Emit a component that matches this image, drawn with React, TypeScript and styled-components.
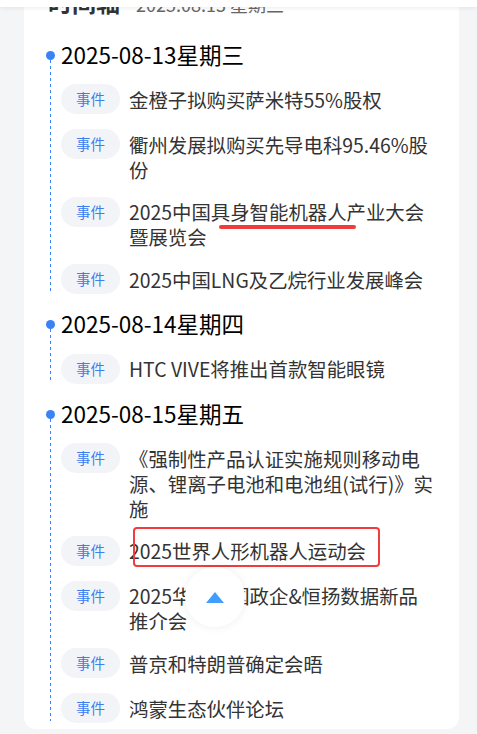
import React from 'react';
import styled, { createGlobalStyle } from 'styled-components';

const GlobalStyle = createGlobalStyle`
  html, body {
    margin: 0;
    padding: 0;
    background: #f4f5f7;
  }
  body {
    font-family: "Noto Sans CJK SC", "Noto Sans", sans-serif;
    color: #333;
  }
`;

const TopBar = styled.div`
  position: fixed;
  top: 0;
  left: 0;
  right: 0;
  height: 7px;
  background: #fff;
  box-shadow: 0 1px 4px rgba(0, 0, 0, 0.08);
  z-index: 5;
`;

const Card = styled.main`
  margin-left: 24px;
  width: 435px;
  box-sizing: border-box;
  background: #fff;
  border-radius: 0 0 12px 12px;
  padding: 0 24px 6px 22px;
  display: flex;
  flex-direction: column;
`;

// title row of the card, mostly scrolled under the top bar
const Heading = styled.div`
  display: flex;
  align-items: baseline;
  gap: 16px;
  height: 24px;
  margin: -10.5px 0 0 2px;
  line-height: 24px;
`;

const HeadingTitle = styled.span`
  font-size: 24px;
  font-weight: 700;
  color: #333;
`;

const HeadingDate = styled.span`
  font-size: 18px;
  color: #666;
`;

const Timeline = styled.div`
  margin-top: 25px;
  display: flex;
  flex-direction: column;
  gap: 14px;
`;

const Group = styled.section`
  display: flex;
  align-items: stretch;
`;

const Rail = styled.div`
  width: 9px;
  display: flex;
  flex-direction: column;
  align-items: center;
`;

const Dot = styled.span`
  width: 9px;
  height: 9px;
  border-radius: 50%;
  background: #3b82f6;
  margin-top: 12px;
  flex-shrink: 0;
`;

const DashLine = styled.span`
  flex: 1;
  width: 1px;
  margin-bottom: 2px;
  background: repeating-linear-gradient(
    to bottom,
    #3b82f6 0 3px,
    transparent 3px 6px
  );
`;

const Body = styled.div`
  flex: 1;
  margin-left: 6px;
  display: flex;
  flex-direction: column;
`;

const DateTitle = styled.h2`
  margin: 0;
  font-size: 22.5px;
  font-weight: 400;
  line-height: 30px;
  color: #000;
`;

const EventList = styled.ul`
  list-style: none;
  margin: 15.5px 0 0;
  padding: 0;
  display: flex;
  flex-direction: column;
  gap: 15px;
`;

const EventRow = styled.li`
  position: relative;
  display: flex;
  align-items: flex-start;
  gap: 9px;
`;

const Tag = styled.span`
  flex-shrink: 0;
  height: 30px;
  line-height: 30px;
  padding: 0 15px;
  border-radius: 15px;
  background: #f3f4f7;
  color: #3b7ff0;
  font-size: 14.5px;
`;

const EventText = styled.span`
  flex: 1;
  padding-top: 2.5px;
  font-size: 19.4px;
  line-height: 25px;
  color: #333;
`;

const MarkLine = styled.span`
  position: absolute;
  left: 158px;
  top: 28.5px;
  width: 137px;
  height: 3.5px;
  border-radius: 2px;
  background: #f03c3c;
`;

const MarkBox = styled.span`
  position: absolute;
  left: 72px;
  top: -8.5px;
  width: 247px;
  height: 40px;
  box-sizing: border-box;
  border: 2px solid #f03c3c;
  border-radius: 4px;
`;

const BackTop = styled.button`
  position: fixed;
  left: 185px;
  top: 567px;
  width: 60px;
  height: 60px;
  padding: 0;
  border: none;
  border-radius: 50%;
  background: #fff;
  box-shadow: 0 0 10px rgba(0, 0, 0, 0.07);
  display: flex;
  align-items: center;
  justify-content: center;
  z-index: 4;
`;

const Arrow = styled.span`
  width: 0;
  height: 0;
  border-left: 9px solid transparent;
  border-right: 9px solid transparent;
  border-bottom: 11px solid #409eff;
`;

type Mark = 'line' | 'box' | undefined;

interface EventItem {
  title: string;
  mark?: Mark;
}

interface DayGroup {
  date: string;
  events: EventItem[];
}

const days: DayGroup[] = [
  {
    date: '2025-08-13星期三',
    events: [
      { title: '金橙子拟购买萨米特55%股权' },
      { title: '衢州发展拟购买先导电科95.46%股份' },
      { title: '2025中国具身智能机器人产业大会暨展览会', mark: 'line' },
      { title: '2025中国LNG及乙烷行业发展峰会' },
    ],
  },
  {
    date: '2025-08-14星期四',
    events: [{ title: 'HTC VIVE将推出首款智能眼镜' }],
  },
  {
    date: '2025-08-15星期五',
    events: [
      { title: '《强制性产品认证实施规则移动电源、锂离子电池和电池组(试行)》实施' },
      { title: '2025世界人形机器人运动会', mark: 'box' },
      { title: '2025华为中国政企&恒扬数据新品推介会' },
      { title: '普京和特朗普确定会晤' },
      { title: '鸿蒙生态伙伴论坛' },
    ],
  },
];

const App: React.FC = () => {
  return (
    <>
      <GlobalStyle />
      <TopBar />
      <Card>
        <Heading>
          <HeadingTitle>时间轴</HeadingTitle>
          <HeadingDate>2025.08.13 星期三</HeadingDate>
        </Heading>
        <Timeline>
          {days.map((day) => (
            <Group key={day.date}>
              <Rail>
                <Dot />
                <DashLine />
              </Rail>
              <Body>
                <DateTitle>{day.date}</DateTitle>
                <EventList>
                  {day.events.map((ev) => (
                    <EventRow key={ev.title}>
                      <Tag>事件</Tag>
                      <EventText>{ev.title}</EventText>
                      {ev.mark === 'line' && <MarkLine />}
                      {ev.mark === 'box' && <MarkBox />}
                    </EventRow>
                  ))}
                </EventList>
              </Body>
            </Group>
          ))}
        </Timeline>
      </Card>
      <BackTop aria-label="回到顶部">
        <Arrow />
      </BackTop>
    </>
  );
};

export default App;
